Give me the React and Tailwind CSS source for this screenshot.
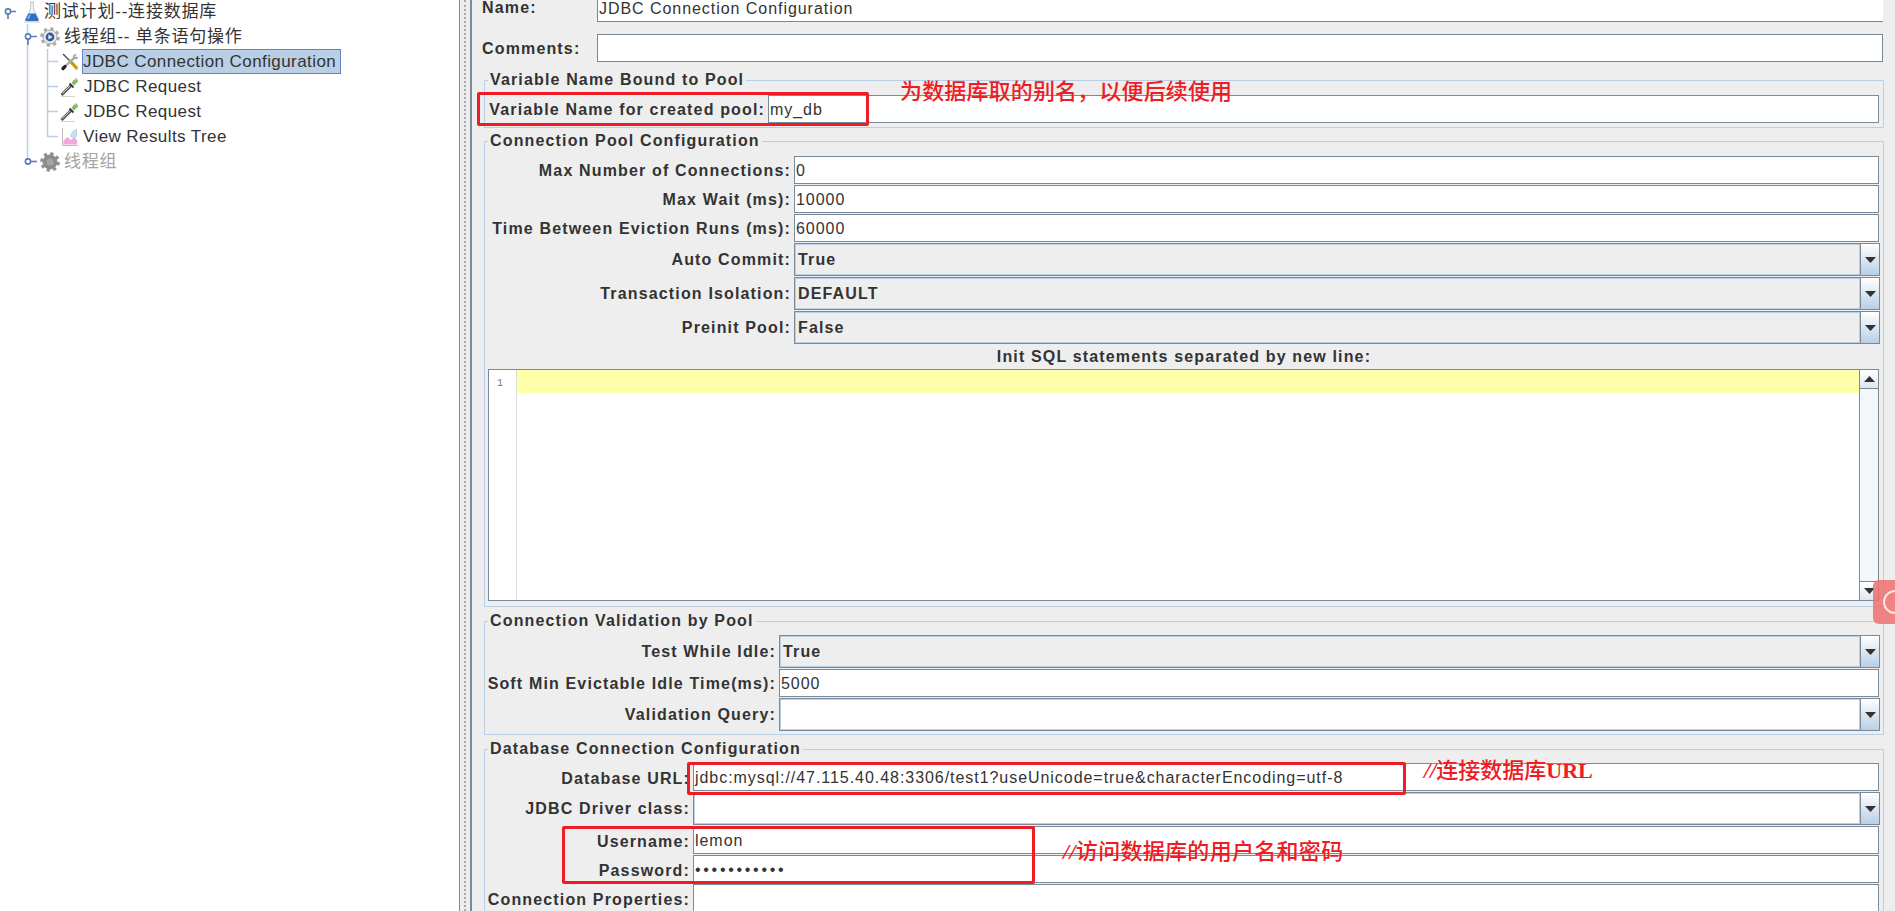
const line = "#b8cfe5";

function Connector({ width, d, handle, stub }) {
  return (
    <svg width={width} height="25" className="shrink-0">
      <path d={d} fill="none" stroke={line} strokeWidth="1.5" />
      {handle && (
        <g fill="none" stroke="#5a7db5" strokeWidth="1.6">
          <path d={stub} />
          <circle cx={handle} cy="12.5" r="2.6" fill="#fff" />
        </g>
      )}
    </svg>
  );
}

function FlaskIcon() {
  return (
    <svg width="20" height="22" viewBox="0 0 20 22" className="shrink-0">
      <path d="M8.500 1h3v7l5 10c.4 1-.2 2-1 2h-11c-.8 0-1.400-1-1-2l5-10z" fill="#eef1f5" stroke="#b4bcc6" strokeWidth=".8" />
      <path d="M6.500 12.500h7l3 6c.2.8-.2 1.500-1 1.500h-11c-.8 0-1.200-.7-1-1.500z" fill="#2f6fc4" />
      <path d="M7 14h2l-2 4H5z" fill="#7fb0e6" />
      <path d="M2 21h16" stroke="#c9ccd0" strokeWidth="1" />
    </svg>
  );
}

function GearIcon({ active }) {
  return (
    <svg width="20" height="20" viewBox="0 0 20 20" className="shrink-0">
      <circle cx="10" cy="10" r="8.2" fill="none" stroke={active ? "#a9a9a9" : "#8f8f8f"} strokeWidth="3.2" strokeDasharray="3.2 3.24" />
      <circle cx="10" cy="10" r="7" fill={active ? "#ececec" : "#8c8c8c"} stroke={active ? "#a0a0a0" : "#8c8c8c"} strokeWidth="1" />
      {active ? (
        <>
          <circle cx="10" cy="10" r="4.4" fill="#2f5f9e" />
          <path d="M8.400 7.400l4.200 2.600-4.200 2.600z" fill="#dfe8f3" />
        </>
      ) : (
        <circle cx="10" cy="10" r="3.6" fill="#a5a5a5" />
      )}
    </svg>
  );
}

function ToolsIcon() {
  return (
    <svg width="20" height="20" viewBox="0 0 20 20" className="shrink-0">
      <path d="M3 2l8 8" stroke="#555" strokeWidth="1.6" />
      <path d="M10.500 9.500l6 6.500" stroke="#e2a81c" strokeWidth="3.400" strokeLinecap="round" />
      <path d="M11 10l5.500 6" stroke="#7a5a10" strokeWidth=".6" />
      <path d="M15 5L3.500 16" stroke="#a8adb3" strokeWidth="2.400" />
      <path d="M5 14.500l-2 2" stroke="#222" strokeWidth="3.200" strokeLinecap="round" />
      <path d="M13.500 3.500c-.8 2 .8 4 3 3.400l1.500-1.500-2 .2-.9-1.300 1-1.800c-1-.2-1.800 0-2.600 1z" fill="#b9bec4" stroke="#777" strokeWidth=".5" />
    </svg>
  );
}

function DropperIcon() {
  return (
    <svg width="20" height="20" viewBox="0 0 20 20" className="shrink-0">
      <path d="M1 19.500h14" stroke="#d4d4d4" strokeWidth="1" />
      <path d="M1.500 18l10-10" stroke="#5a5a5a" strokeWidth="3" />
      <path d="M2.500 16.500l7.500-7.500" stroke="#d8d8d8" strokeWidth=".9" />
      <path d="M9.500 6.500l4 4" stroke="#3a3a3a" strokeWidth="1.800" />
      <path d="M11.500 6l3-4c1.500-1.500 4.500 1 3 3.200L14 8.500z" fill="#7fbd62" />
      <path d="M14.500 3l1.500-.8" stroke="#c2e4b0" strokeWidth="1.200" />
    </svg>
  );
}

function ChartIcon() {
  return (
    <svg width="17" height="20" viewBox="0 0 17 20" className="shrink-0">
      <path d="M1.500 1v17.500H17" fill="none" stroke="#c3b8bd" strokeWidth="1" />
      <path d="M2.500 17.500v-4l4-3.500 3.500 3 3-2.500 3 2.500v4.500z" fill="#f2a6dc" />
      <path d="M9.500 9c1-4 4-6.500 6-6.500v7c0 1.500-4 2.500-6-.5z" fill="#c5dcf2" stroke="#9fbcd8" strokeWidth=".5" />
    </svg>
  );
}

function TreeRow({ children, className }) {
  return <div className={`flex h-[25px] items-center whitespace-nowrap text-[17px] tracking-[0.42px] ${className || "text-[#333]"}`}>{children}</div>;
}

function Tree() {
  return (
    <div className="-mt-[1px] w-[459px] shrink-0 overflow-hidden bg-white">
      <TreeRow>
        <Connector width={22} d="" handle={8} stub="M8 15v5M10 12.500h6" />
        <FlaskIcon />
        <span className="ml-[2px] tracking-[0.8px]">测试计划--连接数据库</span>
      </TreeRow>
      <TreeRow>
        <Connector width={40} d="M27.500 0v25" handle={28} stub="M28 15v6M30 12.500h7" />
        <GearIcon active />
        <span className="ml-[4px] tracking-[0.8px]">线程组-- 单条语句操作</span>
      </TreeRow>
      <TreeRow>
        <Connector width={60} d="M27.500 0v25M47.500 0v25M47 12.500h11" />
        <ToolsIcon />
        <span className="ml-[2px] flex h-[25px] w-[259px] items-center border border-[#6382bf] bg-[#b8cfe5]">JDBC Connection Configuration</span>
      </TreeRow>
      <TreeRow>
        <Connector width={60} d="M27.500 0v25M47.500 0v25M47 12.500h11" />
        <DropperIcon />
        <span className="ml-[4px]">JDBC Request</span>
      </TreeRow>
      <TreeRow>
        <Connector width={60} d="M27.500 0v25M47.500 0v25M47 12.500h11" />
        <DropperIcon />
        <span className="ml-[4px]">JDBC Request</span>
      </TreeRow>
      <TreeRow>
        <Connector width={61} d="M27.500 0v25M47.500 0v13M47 12.500h11" />
        <ChartIcon />
        <span className="ml-[5px]">View Results Tree</span>
      </TreeRow>
      <TreeRow className="text-[#a3a3a3]">
        <Connector width={40} d="M27.500 0v12" handle={28} stub="M30 12.500h7" />
        <GearIcon />
        <span className="ml-[4px] tracking-[0.8px]">线程组</span>
      </TreeRow>
    </div>
  );
}

function Label({ children, className }) {
  return <div className={`flex items-center justify-end whitespace-nowrap pr-[3px] text-[16px] font-bold tracking-[1.15px] text-[#333] ${className || ""}`}>{children}</div>;
}

function TextField({ value, className }) {
  return (
    <div className={`mr-px flex h-[28px] items-center overflow-hidden whitespace-nowrap border border-[#7a8a99] bg-white pt-[2px] pl-[1px] text-[16px] tracking-[0.95px] text-[#333] ${className || ""}`}>
      {value}
    </div>
  );
}

function Combo({ value, white }) {
  return (
    <div className="flex h-[33px] border border-[#7a8a99]">
      <div className={`flex flex-1 items-center border border-[#b8cfe5] pl-[2px] text-[16px] font-bold tracking-[1.15px] text-[#333] ${white ? "bg-white" : "bg-[#eeeeee]"}`}>
        {value}
      </div>
      <div className="flex w-[19px] items-center justify-center border-l border-[#7a8a99] bg-gradient-to-b from-white to-[#b8cfe5]">
        <svg width="11" height="6" viewBox="0 0 11 6"><path d="M0 0h11L5.500 6z" fill="#333" /></svg>
      </div>
    </div>
  );
}

function Group({ title, children, className }) {
  return (
    <fieldset className={`border border-[#b8cfe5] px-[3px] ${className}`}>
      <legend className="h-[20px] whitespace-nowrap px-[2px] text-[16px] leading-[20px] font-bold tracking-[1.15px] text-[#333]">{title}</legend>
      {children}
    </fieldset>
  );
}

function ScrollButton({ up }) {
  return (
    <div className={`flex h-[19px] items-center justify-center bg-gradient-to-b from-white to-[#dce6f0] ${up ? "border-b" : "border-t"} border-[#7a8a99]`}>
      <svg width="11" height="6" viewBox="0 0 11 6"><path d={up ? "M0 6h11L5.500 0z" : "M0 0h11L5.500 6z"} fill="#333" /></svg>
    </div>
  );
}

function Editor() {
  return (
    <div className="mr-px flex h-[232px] border border-[#7a8a99] bg-white">
      <div className="w-[28px] border-r border-[#dddddd] pt-[6px] pl-[8px] font-['Liberation_Mono',monospace] text-[10px] text-[#8a6a8a]">1</div>
      <div className="flex-1"><div className="h-[23px] bg-[#ffffaa]" /></div>
      <div className="flex w-[19px] flex-col border-l border-[#7a8a99] bg-[#f4f7fa]">
        <ScrollButton up />
        <div className="flex-1" />
        <ScrollButton />
      </div>
    </div>
  );
}

function Form() {
  return (
    <div className="min-w-0 flex-1 bg-[#eeeeee] pr-[11px] pl-[10px]">
      <div className="mr-px grid h-[22px] grid-cols-[115px_1fr] grid-rows-[22px]">
        <div className="flex items-center pb-[6px] text-[16px] leading-[16px] font-bold tracking-[1.15px] text-[#333]">Name:</div>
        <div className="flex items-center border-b border-l border-[#7a8a99] bg-white pb-[4px] pl-[1px] text-[16px] leading-[16px] tracking-[0.95px] text-[#333]">JDBC Connection Configuration</div>
      </div>
      <div className="mt-[12px] mr-px grid h-[28px] grid-cols-[115px_1fr]">
        <div className="flex items-center pt-[2px] text-[16px] font-bold tracking-[1.15px] text-[#333]">Comments:</div>
        <div className="border border-[#7a8a99] bg-white" />
      </div>

      <div className="ml-[2px]">
        <Group title="Variable Name Bound to Pool" className="mt-[8px] h-[58px]">
          <div className="mt-[5px] grid grid-cols-[280px_1fr]">
            <Label className="pt-[2px]">Variable Name for created pool:</Label>
            <TextField value="my_db" />
          </div>
        </Group>

        <Group title="Connection Pool Configuration" className="mt-[3px] h-[476px]">
          <div className="mt-[5px] grid grid-cols-[306px_1fr] gap-y-px">
            <Label className="pt-[2px]">Max Number of Connections:</Label>
            <TextField value="0" />
            <Label className="pt-[2px]">Max Wait (ms):</Label>
            <TextField value="10000" />
            <Label className="pt-[2px]">Time Between Eviction Runs (ms):</Label>
            <TextField value="60000" />
            <Label>Auto Commit:</Label>
            <Combo value="True" />
            <Label>Transaction Isolation:</Label>
            <Combo value="DEFAULT" />
            <Label>Preinit Pool:</Label>
            <Combo value="False" />
          </div>
          <div className="flex h-[25px] items-center justify-center text-[16px] font-bold tracking-[1.15px] text-[#333]">Init SQL statements separated by new line:</div>
          <Editor />
        </Group>

        <Group title="Connection Validation by Pool" className="mt-[4px] h-[124px]">
          <div className="mt-[4px] grid grid-cols-[291px_1fr] gap-y-px">
            <Label>Test While Idle:</Label>
            <Combo value="True" />
            <Label className="pt-[2px]">Soft Min Evictable Idle Time(ms):</Label>
            <TextField value="5000" />
            <Label>Validation Query:</Label>
            <Combo value="" white />
          </div>
        </Group>

        <Group title="Database Connection Configuration" className="mt-[4px] h-[200px]">
          <div className="mt-[4px] grid grid-cols-[205px_1fr] gap-y-px">
            <Label className="pt-[4px]">Database URL:</Label>
            <TextField value="jdbc:mysql://47.115.40.48:3306/test1?useUnicode=true&characterEncoding=utf-8" />
            <Label>JDBC Driver class:</Label>
            <Combo value="" white />
            <Label className="pt-[4px]">Username:</Label>
            <TextField value="lemon" />
            <Label className="pt-[4px]">Password:</Label>
            <TextField value="•••••••••••" className="tracking-[2.7px]" />
            <Label className="pt-[4px]">Connection Properties:</Label>
            <TextField value="" />
          </div>
        </Group>
      </div>
    </div>
  );
}

export default function App() {
  return (
    <div className="relative flex h-[911px] w-full overflow-hidden bg-white font-['Liberation_Sans','Noto_Sans_CJK_SC',sans-serif]">
      <Tree />
      <div className="flex w-[13px] shrink-0 border-x-2 border-l-1 border-[#7a8a99] bg-[#eeeeee] pl-[4px]">
        <div className="border-l-2 border-dotted border-[#a8a8a8]" />
      </div>
      <Form />

      {/* annotations drawn on top of the screenshot */}
      <div className="absolute top-[92px] left-[477px] h-[34px] w-[392px] rounded-[2px] border-[3px] border-[#ee1c25]" />
      <div className="absolute top-[762px] left-[687px] h-[33px] w-[719px] rounded-[2px] border-[3px] border-[#ee1c25]" />
      <div className="absolute top-[826px] left-[562px] h-[58px] w-[473px] rounded-[2px] border-[3px] border-[#ee1c25]" />
      <div className="absolute top-[78px] left-[900px] text-[22px] leading-[28px] font-medium tracking-[0.15px] whitespace-nowrap text-[#ee1c25]">为数据库取的别名，以便后续使用</div>
      <div className="absolute top-[757px] left-[1424px] text-[22px] leading-[28px] font-medium whitespace-nowrap text-[#ee1c25]"><span className="font-['Liberation_Serif',serif] font-bold italic">//</span>连接数据库<span className="font-['Liberation_Serif',serif] font-bold">URL</span></div>
      <div className="absolute top-[838px] left-[1063px] text-[22px] leading-[28px] font-medium tracking-[0.3px] whitespace-nowrap text-[#ee1c25]"><span className="font-['Liberation_Serif',serif] font-bold italic">//</span>访问数据库的用户名和密码</div>

      <div className="absolute top-[580px] right-0 flex h-[44px] w-[22px] items-center overflow-hidden rounded-l-[6px] bg-[#ee6f6f]/85 pl-[10px]">
        <div className="h-[24px] w-[24px] shrink-0 rounded-full border-2 border-white/80" />
      </div>
    </div>
  );
}
